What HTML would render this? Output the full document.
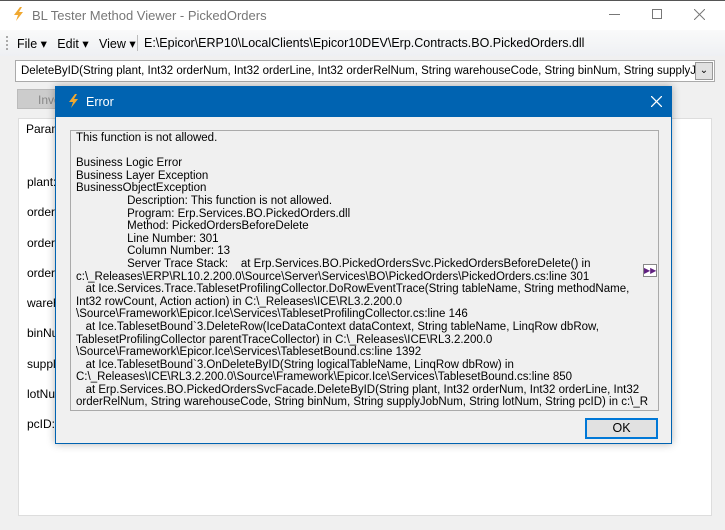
<!DOCTYPE html>
<html><head><style>
*{margin:0;padding:0;box-sizing:border-box}
body{width:725px;height:530px;background:#f0f0f0;font-family:"Liberation Sans",sans-serif;font-size:12px;color:#000;position:relative;overflow:hidden}
.a{position:absolute}
.t{white-space:pre;line-height:12.6px;font-size:11.5px}
</style></head><body>
<div class="a" style="left:0;top:0;width:725px;height:30px;background:#fff;border-top:1px solid #555"></div>
<svg class="a" style="left:13px;top:7px" width="12" height="14" viewBox="0 0 12 14"><path d="M7 0L1 8h4l-2 6 7-9H6l3-5z" fill="#f0a830"/></svg>
<div class="a" style="left:32px;top:8px;color:#777;font-size:13px">BL Tester Method Viewer - PickedOrders</div>
<div class="a" style="left:609px;top:14px;width:11px;height:1px;background:#777"></div>
<div class="a" style="left:652px;top:9px;width:10px;height:10px;border:1px solid #777"></div>
<svg class="a" style="left:694px;top:9px" width="11" height="11"><path d="M0 0L11 11M11 0L0 11" stroke="#777" stroke-width="1"/></svg>
<div class="a" style="left:0;top:30px;width:725px;height:26px;background:linear-gradient(#fafafa,#eef0f3)"></div>
<div class="a" style="left:6px;top:36px;width:1px;height:14px;border-left:2px dotted #aaa"></div>
<div class="a" style="left:17px;top:36px;font-size:12.5px">File ▾&nbsp;&nbsp; Edit ▾&nbsp;&nbsp; View ▾</div>
<div class="a" style="left:137px;top:35px;width:1px;height:16px;background:#bbb"></div>
<div class="a" style="left:144px;top:36px;font-size:12.5px">E:\Epicor\ERP10\LocalClients\Epicor10DEV\Erp.Contracts.BO.PickedOrders.dll</div>
<div class="a" style="left:15px;top:60px;width:700px;height:22px;background:#fff;border:1px solid #aaa"></div>
<div class="a" style="left:21px;top:65px;font-size:11.5px;white-space:nowrap;width:674px;overflow:hidden">DeleteByID(String plant, Int32 orderNum, Int32 orderLine, Int32 orderRelNum, String warehouseCode, String binNum, String supplyJobNum</div>
<div class="a" style="left:695px;top:62px;width:18px;height:18px;background:#e1e1e1;border:1px solid #999;font-size:10px;text-align:center;line-height:16px">⌄</div>
<div class="a" style="left:17px;top:89px;width:50px;height:20px;background:#ccc;border:1px solid #bbb;color:#888;padding:3px 0 0 20px">Invoke</div>
<div class="a" style="left:18px;top:118px;width:694px;height:398px;background:#fff;border:1px solid #ddd"></div>
<div class="a" style="left:26px;top:122px">Param</div>
<div class="a" style="left:27px;top:167px;line-height:30.3px">plant:<br>orderN<br>orderL<br>orderR<br>wareh<br>binNu<br>supply<br>lotNu<br>pcID:</div>
<div class="a" style="left:55px;top:86px;width:617px;height:358px;background:#f0f0f0;border:1px solid #0063b1;box-shadow:0 0 8px rgba(0,0,0,.3)"></div>
<div class="a" style="left:55px;top:86px;width:617px;height:31px;background:#0063b1"></div>
<svg class="a" style="left:68px;top:94px" width="12" height="14" viewBox="0 0 12 14"><path d="M7 0L1 8h4l-2 6 7-9H6l3-5z" fill="#f0a830"/></svg>
<div class="a" style="left:86px;top:95px;color:#fff;font-size:12.5px">Error</div>
<svg class="a" style="left:651px;top:96px" width="11" height="11"><path d="M0 0L11 11M11 0L0 11" stroke="#fff" stroke-width="1.3"/></svg>
<div class="a" style="left:70px;top:130px;width:589px;height:281px;border:1px solid #aaa;background:#f0f0f0"></div>
<div class="a t" style="left:76px;top:132px">This function is not allowed.

Business Logic Error
Business Layer Exception
BusinessObjectException
                Description: This function is not allowed.
                Program: Erp.Services.BO.PickedOrders.dll
                Method: PickedOrdersBeforeDelete
                Line Number: 301
                Column Number: 13
                Server Trace Stack:    at Erp.Services.BO.PickedOrdersSvc.PickedOrdersBeforeDelete() in
c:\_Releases\ERP\RL10.2.200.0\Source\Server\Services\BO\PickedOrders\PickedOrders.cs:line 301
   at Ice.Services.Trace.TablesetProfilingCollector.DoRowEventTrace(String tableName, String methodName,
Int32 rowCount, Action action) in C:\_Releases\ICE\RL3.2.200.0
\Source\Framework\Epicor.Ice\Services\TablesetProfilingCollector.cs:line 146
   at Ice.TablesetBound`3.DeleteRow(IceDataContext dataContext, String tableName, LinqRow dbRow,
TablesetProfilingCollector parentTraceCollector) in C:\_Releases\ICE\RL3.2.200.0
\Source\Framework\Epicor.Ice\Services\TablesetBound.cs:line 1392
   at Ice.TablesetBound`3.OnDeleteByID(String logicalTableName, LinqRow dbRow) in
C:\_Releases\ICE\RL3.2.200.0\Source\Framework\Epicor.Ice\Services\TablesetBound.cs:line 850
   at Erp.Services.BO.PickedOrdersSvcFacade.DeleteByID(String plant, Int32 orderNum, Int32 orderLine, Int32
orderRelNum, String warehouseCode, String binNum, String supplyJobNum, String lotNum, String pcID) in c:\_R</div>
<div class="a" style="left:643px;top:264px;width:14px;height:13px;border:1px solid #888;background:#fff;color:#602080;font-size:8px;text-align:center;line-height:11px">▶▶</div>
<div class="a" style="left:585px;top:418px;width:73px;height:21px;border:2px solid #0078d7;background:#e1e1e1;text-align:center;line-height:17px;font-size:12.5px">OK</div>
</body></html>
